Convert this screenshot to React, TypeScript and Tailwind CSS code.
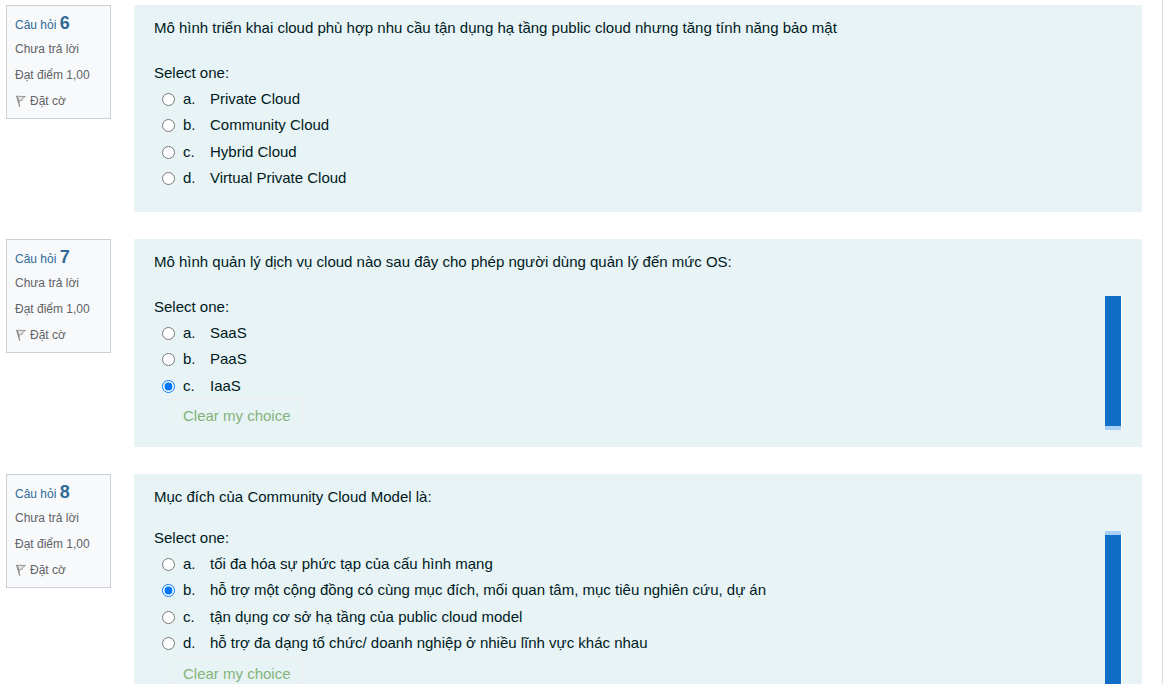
import { useState } from "react";

type Bar = "none" | "bottom" | "top";

interface Question {
  id: number;
  text: string;
  options: string[];
  selected: number | null;
  compact: boolean;
  bar: Bar;
}

const questions: Question[] = [
  {
    id: 6,
    text: "Mô hình triển khai cloud phù hợp nhu cầu tận dụng hạ tầng public cloud nhưng tăng tính năng bảo mật",
    options: ["Private Cloud", "Community Cloud", "Hybrid Cloud", "Virtual Private Cloud"],
    selected: null,
    compact: false,
    bar: "none",
  },
  {
    id: 7,
    text: "Mô hình quản lý dịch vụ cloud nào sau đây cho phép người dùng quản lý đến mức OS:",
    options: ["SaaS", "PaaS", "IaaS"],
    selected: 2,
    compact: false,
    bar: "bottom",
  },
  {
    id: 8,
    text: "Mục đích của Community Cloud Model là:",
    options: [
      "tối đa hóa sự phức tạp của cấu hình mạng",
      "hỗ trợ một cộng đồng có cùng mục đích, mối quan tâm, mục tiêu nghiên cứu, dự án",
      "tận dụng cơ sở hạ tầng của public cloud model",
      "hỗ trợ đa dạng tổ chức/ doanh nghiệp ở nhiều lĩnh vực khác nhau",
    ],
    selected: 1,
    compact: true,
    bar: "top",
  },
];

function FlagIcon() {
  return (
    <svg width="12" height="12" viewBox="0 0 12 12" fill="none" aria-hidden="true">
      <path d="M1.6 0.8L4.8 11.6" stroke="#8c8c8c" strokeWidth="1.3" />
      <path d="M2.6 1.2L4.8 8" stroke="#a8a8a8" strokeWidth="1" />
      <path
        d="M2.4 1.4C4.8 0.8 7 2 10.4 1.4L7.6 3.6L7 5.4C5.6 5.4 4.8 5.4 3.8 6.2Z"
        fill="#e4e4e4"
        stroke="#8c8c8c"
        strokeWidth="0.9"
      />
    </svg>
  );
}

function QuestionInfo({ id }: { id: number }) {
  return (
    <aside className="flex h-[114px] w-[105px] shrink-0 flex-col border border-[#cad0d7] bg-[#f8f9fa] px-2 pt-1 text-xs text-[#5f6368]">
      <h3 className="h-[26px] leading-[26px] text-[#306b98]">
        Câu hỏi <span className="text-lg leading-[26px] font-bold">{id}</span>
      </h3>
      <p className="h-[26px] leading-[26px]">Chưa trả lời</p>
      <p className="h-[26px] leading-[26px]">Đạt điểm 1,00</p>
      <button type="button" className="flex h-[26px] items-center gap-[3px] text-left leading-[26px]">
        <FlagIcon />
        Đặt cờ
      </button>
    </aside>
  );
}

function SideBar({ bar }: { bar: Bar }) {
  if (bar === "none") return null;
  return bar === "bottom" ? (
    <div className="mt-[57px] mb-[17px] w-[17px] shrink-0 border-r border-white">
      <div className="h-full border-b-4 border-[#a6d0f5] bg-[#106ec6]" />
    </div>
  ) : (
    <div className="mt-[57px] w-[17px] shrink-0 border-r border-white">
      <div className="h-full border-t-4 border-[#a6d0f5] bg-[#106ec6]" />
    </div>
  );
}

function QuestionBlock({ question }: { question: Question }) {
  const [selected, setSelected] = useState<number | null>(question.selected);
  const name = `question-${question.id}`;
  return (
    <section className="flex items-start gap-[23px]">
      <QuestionInfo id={question.id} />
      <div className="flex min-w-0 flex-1 items-stretch bg-[#e7f3f5] pr-5 pl-5">
        <div className="min-w-0 flex-1 pt-[11px] pb-5 text-[15px] text-[#001a1e]">
          <p className={question.compact ? "mb-[18px] leading-[23px]" : "mb-[22px] leading-[23px]"}>{question.text}</p>
          <fieldset>
            <legend className="leading-[23px]">Select one:</legend>
            <div className="pt-[2px] pl-2">
              {question.options.map((option, i) => (
                <label key={option} className="flex items-center odd:h-[26px] even:h-[27px]">
                  <input
                    type="radio"
                    name={name}
                    checked={selected === i}
                    onChange={() => setSelected(i)}
                    className="mr-2 size-[13px] shrink-0"
                  />
                  <span className="w-[27px] shrink-0">{"abcd"[i]}.</span>
                  <span>{option}</span>
                </label>
              ))}
            </div>
          </fieldset>
          {selected !== null && (
            <button
              type="button"
              onClick={() => setSelected(null)}
              className="ml-4 flex h-7 items-center border border-b-0 border-[#efecee] px-3 pt-1.5 text-[#83b37a]"
            >
              Clear my choice
            </button>
          )}
        </div>
        <SideBar bar={question.bar} />
      </div>
    </section>
  );
}

export default function App() {
  return (
    <div className="min-h-screen bg-white pr-px font-['Liberation_Sans',Arial,sans-serif]">
      <main className="flex min-h-screen flex-col gap-[27px] border-r border-[#dcdcdc] pt-[5px] pr-5 pb-[27px] pl-[6px]">
        {questions.map((question) => (
          <QuestionBlock key={question.id} question={question} />
        ))}
      </main>
    </div>
  );
}
